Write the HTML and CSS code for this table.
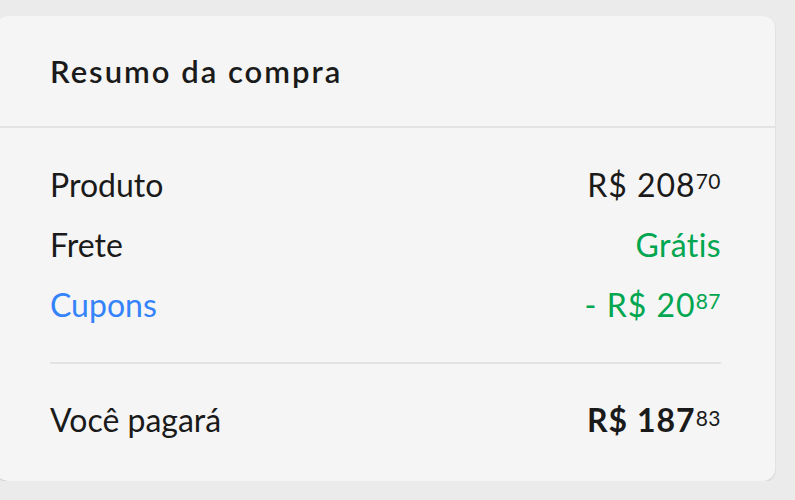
FILE: index.html
```html
<!DOCTYPE html>
<html lang="pt-BR">
<head>
<meta charset="utf-8">
<title>Resumo da compra</title>
<link rel="stylesheet" href="styles.css">
</head>
<body>
<section class="card">
  <header class="card-header">
    <h2 class="title">Resumo da compra</h2>
  </header>
  <div class="card-body">
    <div class="row">
      <span class="label">Produto</span>
      <span class="value">R$ 208<sup class="cents">70</sup></span>
    </div>
    <div class="row">
      <span class="label">Frete</span>
      <span class="value free">Grátis</span>
    </div>
    <div class="row">
      <span class="label blue">Cupons</span>
      <span class="value green">- R$ 20<sup class="cents">87</sup></span>
    </div>
    <hr class="divider">
    <div class="row total">
      <span class="label">Você pagará</span>
      <span class="value strong">R$ 187<sup class="cents">83</sup></span>
    </div>
  </div>
</section>
</body>
</html>
```
FILE: styles.css
```css
html, body {
  margin: 0;
  padding: 0;
  background: #ebebeb;
}
body {
  font-family: "Lato", "Liberation Sans", sans-serif;
  color: #1a1a1a;
  padding-top: 16px;
}
.card {
  margin-left: -4px;
  width: 779px;
  height: 465px;
  box-sizing: border-box;
  background: #f5f5f5;
  border-radius: 12px;
  box-shadow: 0 1px 2px rgba(0, 0, 0, 0.14);
  display: flex;
  flex-direction: column;
}
.card-header {
  height: 112px;
  box-sizing: border-box;
  padding: 0 54px;
  border-bottom: 2px solid #e3e3e3;
  display: flex;
  align-items: center;
}
.title {
  margin: 0;
  font-size: 31px;
  font-weight: 600;
  letter-spacing: 2px;
  line-height: 1;
}
.card-body {
  padding: 27px 54px 0;
  display: flex;
  flex-direction: column;
}
.row {
  display: flex;
  justify-content: space-between;
  align-items: baseline;
  height: 60px;
  line-height: 60px;
  font-size: 32px;
}
.value { letter-spacing: 1px; }
.value .cents { letter-spacing: 0.5px; }
.green, .free { color: #00a650; }
.free { letter-spacing: 0.4px; }
.blue { color: #3483fa; }
.cents {
  font-size: 21px;
  line-height: 0;
  vertical-align: 8px;
  margin-left: 0;
}
.divider {
  border: 0;
  height: 2px;
  background: #e3e3e3;
  margin: 27px 0 26px;
}
.strong { font-weight: 700; }
.total .cents { font-weight: 400; vertical-align: 6px; }
```
